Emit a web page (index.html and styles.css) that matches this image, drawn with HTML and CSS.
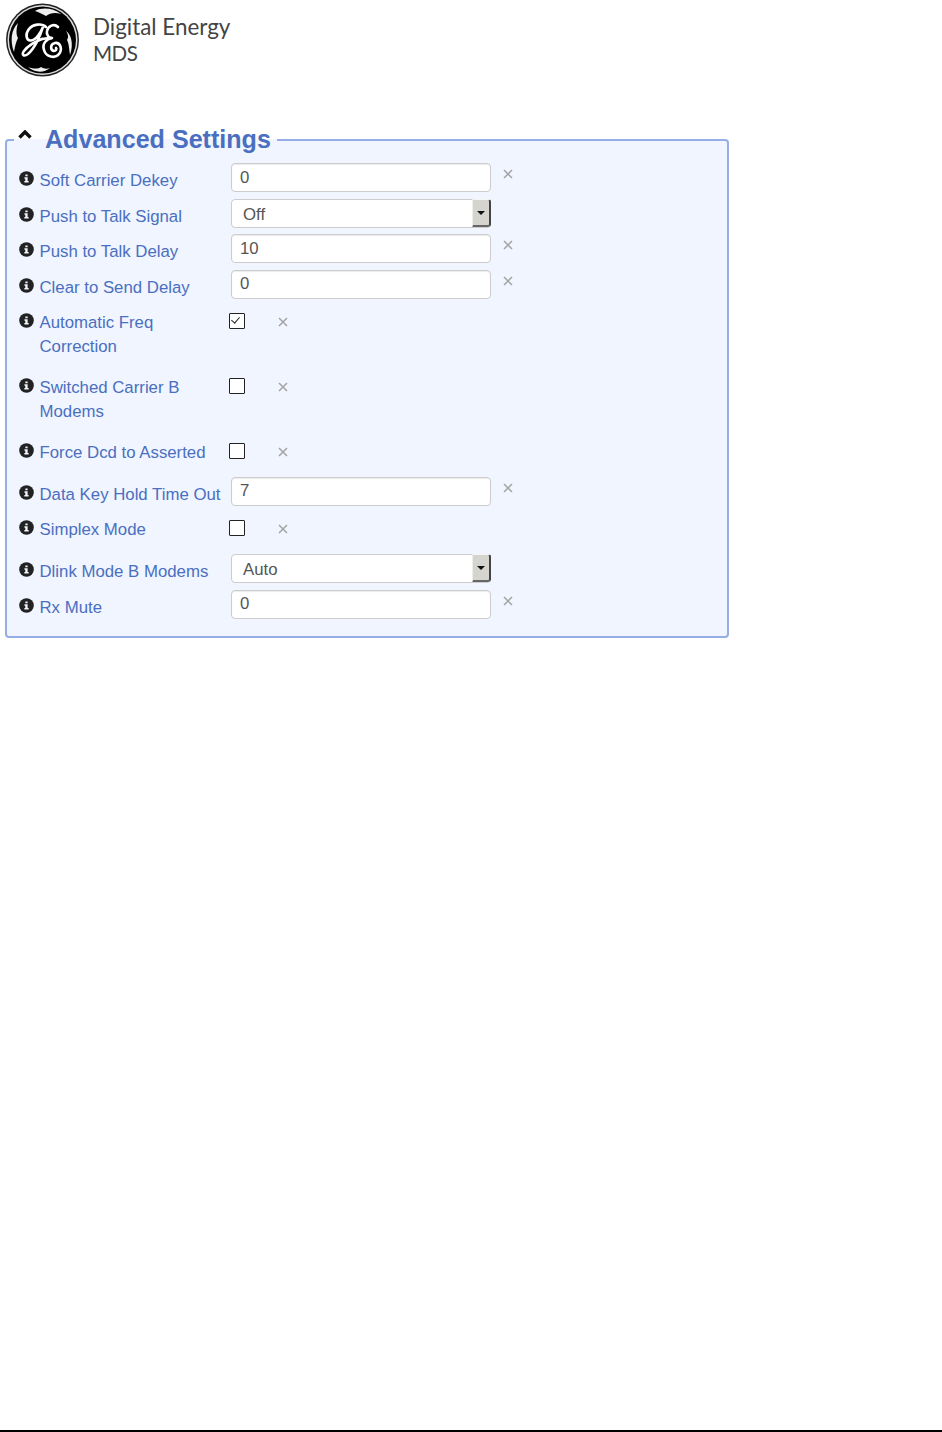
FILE: index.html
```html
<!DOCTYPE html>
<html lang="en">
<head>
    <meta charset="UTF-8">
    <title>Advanced Settings</title>
    <link rel="stylesheet" href="styles.css">
</head>
<body>
    <svg width="0" height="0" class="defs">
        <symbol id="info" viewBox="0 0 16 16">
            <circle cx="8" cy="8" r="7.800" fill="#222"/>
            <path d="M6.800 3.600h2.400v1.900H6.800zM5.800 6.700h3.400v3.900h1.100v1.600H5.700v-1.600h1V8.300h-.9z" fill="#f0f5ff"/>
        </symbol>
        <symbol id="close" viewBox="0 0 10 10">
            <path d="M1 1l8 8M9 1l-8 8" stroke="#a3a3a3" stroke-width="1.500" fill="none"/>
        </symbol>
    </svg>

    <header class="brand">
        <svg class="logo" width="76" height="76" viewBox="0 0 76 76">
            <circle cx="38.500" cy="38" r="36.500" fill="#222"/>
            <circle cx="38.500" cy="38" r="35" fill="#ddd"/>
            <circle cx="38.500" cy="38" r="33.500" fill="#000"/>
            <g fill="#eee">
                <path d="M31 9C38 5 49 6 57 12C51 10 46 11 42 14C38 12 35 10 31 9z"/>
                <path d="M62 29C67 32 70 42 66 53C65 46 65 42 63 38C65 35 64 32 62 29z"/>
                <path d="M46 66C40 71 31 71 24 65C30 67 34 67 37 65C40 67 43 67 46 66z"/>
                <path d="M14 21C7 28 6 39 10 50C11 44 12 40 14 36C12 33 12 27 14 21z"/>
            </g>
            <g fill="none" stroke="#fff" stroke-linecap="round" stroke-width="2.600">
                <path d="M42 25C38 21 29 22 25 27C21 32 22 39 27 38.500C32 38 37 30 39 25C36 35 30 47 24 52C20 55 17 53 20 49C23 45 30 40 38 37"/>
                <path d="M54 25C50 21 44 24 43 29C42 33 45 36 48 36C42 37 38 42 40 48C42 55 51 57 55 52C59 47 56 40 51 41C46 42 46 48 50 49C52 49 53 47 52 46"/>
                <path d="M38 37C41 36.500 45 36 48 36"/>
            </g>
        </svg>
        <div class="brand-name">
            <div>Digital Energy</div>
            <div class="brand-sub">MDS</div>
        </div>
    </header>

    <fieldset class="panel">
        <legend class="panel-title">
            <svg class="chevron" width="14" height="9" viewBox="0 0 14 9"><path d="M1.500 7.500L7 2l5.500 5.500" fill="none" stroke="#111" stroke-width="3.400"/></svg>
            <span>Advanced Settings</span>
        </legend>

        <div class="row">
            <label class="field-label"><svg class="info"><use href="#info"/></svg><span>Soft Carrier Dekey</span></label>
            <input class="text-input" type="text" value="0">
            <svg class="clear"><use href="#close"/></svg>
        </div>
        <div class="row">
            <label class="field-label"><svg class="info"><use href="#info"/></svg><span>Push to Talk Signal</span></label>
            <div class="select-wrap">
                <select class="select-input"><option>Off</option></select>
                <span class="select-arrow"></span>
            </div>
        </div>
        <div class="row">
            <label class="field-label"><svg class="info"><use href="#info"/></svg><span>Push to Talk Delay</span></label>
            <input class="text-input" type="text" value="10">
            <svg class="clear"><use href="#close"/></svg>
        </div>
        <div class="row">
            <label class="field-label"><svg class="info"><use href="#info"/></svg><span>Clear to Send Delay</span></label>
            <input class="text-input" type="text" value="0">
            <svg class="clear"><use href="#close"/></svg>
        </div>
        <div class="row row-check">
            <label class="field-label"><svg class="info"><use href="#info"/></svg><span>Automatic Freq<br>Correction</span></label>
            <input class="check" type="checkbox" checked>
            <svg class="clear"><use href="#close"/></svg>
        </div>
        <div class="row row-check">
            <label class="field-label"><svg class="info"><use href="#info"/></svg><span>Switched Carrier B<br>Modems</span></label>
            <input class="check" type="checkbox">
            <svg class="clear"><use href="#close"/></svg>
        </div>
        <div class="row row-check">
            <label class="field-label"><svg class="info"><use href="#info"/></svg><span>Force Dcd to Asserted</span></label>
            <input class="check" type="checkbox">
            <svg class="clear"><use href="#close"/></svg>
        </div>
        <div class="row">
            <label class="field-label"><svg class="info"><use href="#info"/></svg><span>Data Key Hold Time Out</span></label>
            <input class="text-input" type="text" value="7">
            <svg class="clear"><use href="#close"/></svg>
        </div>
        <div class="row row-check">
            <label class="field-label"><svg class="info"><use href="#info"/></svg><span>Simplex Mode</span></label>
            <input class="check" type="checkbox">
            <svg class="clear"><use href="#close"/></svg>
        </div>
        <div class="row">
            <label class="field-label"><svg class="info"><use href="#info"/></svg><span>Dlink Mode B Modems</span></label>
            <div class="select-wrap">
                <select class="select-input"><option>Auto</option></select>
                <span class="select-arrow"></span>
            </div>
        </div>
        <div class="row">
            <label class="field-label"><svg class="info"><use href="#info"/></svg><span>Rx Mute</span></label>
            <input class="text-input" type="text" value="0">
            <svg class="clear"><use href="#close"/></svg>
        </div>
    </fieldset>

    <div class="page-rule"></div>
</body>
</html>
```

FILE: styles.css
```css
html, body {
    margin: 0;
    padding: 0;
}
body {
    height: 1432px;
    display: flex;
    flex-direction: column;
    background-color: white;
    font-family: "Liberation Sans", Arial, sans-serif;
    overflow: hidden;
}
.defs {
    position: absolute;
}
.brand {
    display: flex;
    align-items: flex-start;
    height: 124px;
    padding: 2px 0 0 4px;
    box-sizing: border-box;
}
.brand-name {
    margin: 11px 0 0 13px;
    font-family: Lato, sans-serif;
    font-size: 22.400px;
    line-height: 27px;
    color: #444;
}
.brand-sub {
    font-size: 20.600px;
    letter-spacing: -0.5px;
}
.panel {
    width: 724px;
    box-sizing: border-box;
    margin: 0 0 0 5px;
    padding: 0 13px 11px 12px;
    border: 2px solid #96ade6;
    border-radius: 4px;
    background-color: #f0f5ff;
    min-width: 0;
}
.panel-title {
    display: flex;
    align-items: center;
    margin-left: -5px;
    padding: 0 6px 0 4px;
    height: 31px;
    font-size: 25.100px;
    font-weight: bold;
    color: #4a6fc0;
}
.chevron {
    margin: -11px 13px 0 0;
}
.row {
    display: flex;
    align-items: flex-start;
    height: 35.6px;
}
.panel-title + .row {
    margin-top: 8px;
}
.row-check {
    height: auto;
    margin-bottom: 12px;
}
.field-label {
    display: flex;
    align-items: flex-start;
    width: 212px;
    flex: none;
    padding-top: 6px;
    font-size: 16.800px;
    line-height: 23.500px;
    color: #4a6fc0;
}
.info {
    width: 15px;
    height: 15px;
    flex: none;
    margin: 2px 5.500px 0 0;
}
.text-input {
    width: 260px;
    height: 29px;
    box-sizing: border-box;
    padding: 0 8px;
    border: 1px solid #ccc;
    border-radius: 4px;
    background-color: white;
    font-family: "Liberation Sans", Arial, sans-serif;
    font-size: 16.800px;
    color: #555;
    box-shadow: inset 0 1px 1px rgba(0,0,0,0.08);
}
.select-wrap {
    position: relative;
    width: 260px;
    height: 29px;
}
.select-input {
    width: 100%;
    height: 100%;
    box-sizing: border-box;
    padding: 3px 11px 0;
    appearance: none;
    border: 1px solid #ccc;
    border-radius: 4px;
    background-color: white;
    font-family: "Liberation Sans", Arial, sans-serif;
    font-size: 16.800px;
    color: #555;
}
.select-arrow {
    position: absolute;
    top: 0;
    right: 0;
    width: 19px;
    height: 28px;
    box-sizing: border-box;
    border-radius: 0 3px 3px 0;
    border-top: 1px solid #f4f4f0;
    border-left: 1px solid #efefea;
    border-right: 2px solid #444;
    border-bottom: 2px solid #666;
    background-color: #d6d4ce;
}
.select-arrow::after {
    content: "";
    position: absolute;
    top: 11px;
    left: 4px;
    border-style: solid;
    border-width: 4px 4px 0 4px;
    border-color: #111 transparent transparent transparent;
}
.clear {
    width: 10px;
    height: 10px;
    flex: none;
    margin: 6px 0 0 12px;
}
.check {
    appearance: none;
    position: relative;
    flex: none;
    width: 16px;
    height: 16px;
    box-sizing: border-box;
    margin: 8px 0 0 -2.500px;
    border: 1.700px solid #222;
    border-radius: 1px;
    background-color: white;
}
.check:checked::after {
    content: "";
    position: absolute;
    left: 3.500px;
    top: 1px;
    width: 4px;
    height: 7px;
    border-right: 1.300px solid #222;
    border-bottom: 1.300px solid #222;
    transform: rotate(40deg);
}
.check + .clear {
    margin: 12px 0 0 33.500px;
}
.page-rule {
    margin-top: auto;
    height: 2px;
    background-color: black;
}
```
